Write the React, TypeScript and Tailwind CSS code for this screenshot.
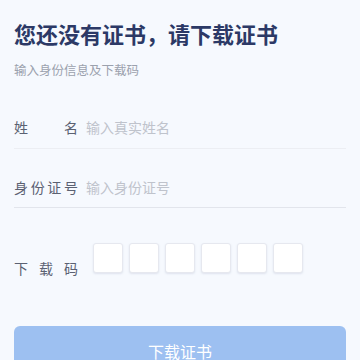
export default function App() {
  const boxes = [0, 1, 2, 3, 4, 5];

  return (
    <div
      className="w-[360px] h-[360px] overflow-hidden bg-[#f6f9fe] px-[14px] pt-[19px]"
      style={{ fontFamily: '"Noto Sans CJK SC", "Noto Sans", sans-serif' }}
    >
      {/* Header */}
      <h1 className="text-[22px] leading-[28px] font-bold text-[#2c3966]">
        您还没有证书，请下载证书
      </h1>
      <p className="mt-[15px] text-[12.5px] leading-[16px] text-[#9ba1ad]">
        输入身份信息及下载码
      </p>

      {/* Name */}
      <div className="mt-[39px] pb-[11px] flex items-center border-b border-[#eceef3]">
        <span className="w-[64px] flex justify-between text-[14px] leading-[20px] text-[#5b6172]">
          <span>姓</span>
          <span>名</span>
        </span>
        <input
          className="ml-[8px] flex-1 h-[20px] bg-transparent outline-none text-[14px] text-[#333] placeholder:text-[#bfc3cc]"
          placeholder="输入真实姓名"
        />
      </div>

      {/* ID */}
      <div className="pt-[28px] pb-[10px] flex items-center border-b border-[#e2e5ec]">
        <span className="w-[64px] flex justify-between text-[14px] leading-[20px] text-[#5b6172]">
          <span>身</span>
          <span>份</span>
          <span>证</span>
          <span>号</span>
        </span>
        <input
          className="ml-[8px] flex-1 h-[20px] bg-transparent outline-none text-[14px] text-[#333] placeholder:text-[#bfc3cc]"
          placeholder="输入身份证号"
        />
      </div>

      {/* Download code */}
      <div className="mt-[35px] flex items-start">
        <span className="mt-[15px] w-[64px] flex justify-between text-[14px] leading-[20px] text-[#5b6172]">
          <span>下</span>
          <span>载</span>
          <span>码</span>
        </span>
        <div className="ml-[15px] flex gap-[6px]">
          {boxes.map((b) => (
            <div
              key={b}
              className="w-[30px] h-[30px] rounded-[3px] bg-white border border-[#e6e8ef] shadow-[0_1px_2px_rgba(180,186,205,0.35)]"
            />
          ))}
        </div>
      </div>

      {/* Button */}
      <button className="mt-[48px] w-full h-[50px] rounded-[6px] bg-[#9dc0f1] text-white text-[16px] leading-[20px] flex items-start justify-center pt-[15px]">
        下载证书
      </button>
    </div>
  );
}
